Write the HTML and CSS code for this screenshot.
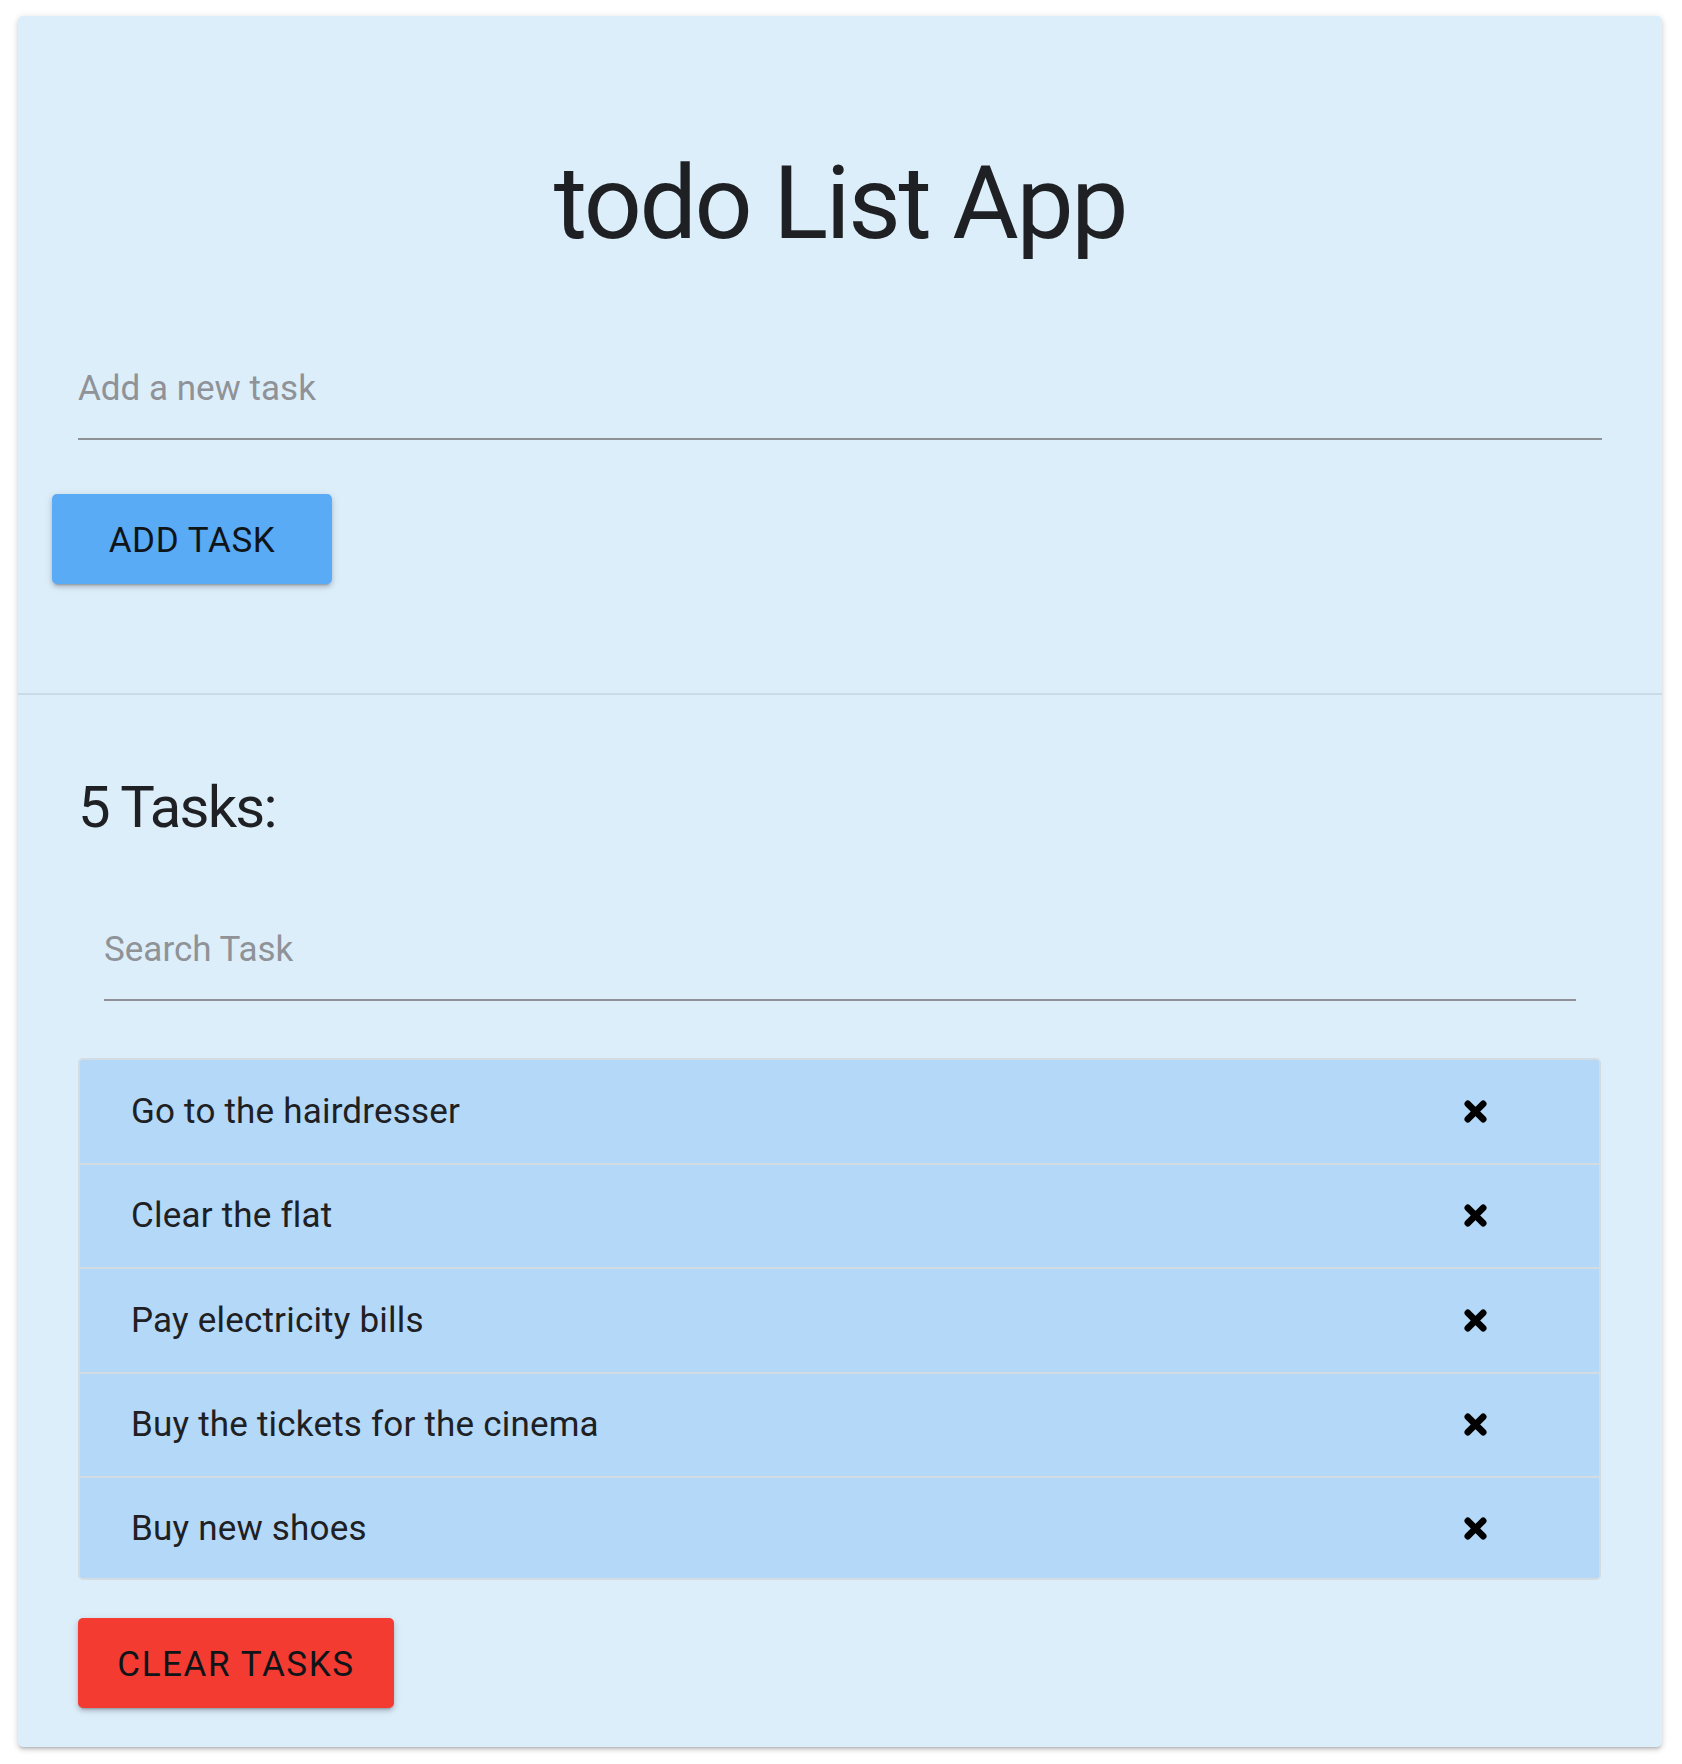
FILE: index.html
```html
<!DOCTYPE html>
<html lang="en">
<head>
<meta charset="utf-8">
<title>todo List App</title>
<link rel="stylesheet" href="styles.css">
</head>
<body>
<div class="page">
  <main class="card">
    <section class="top">
      <h1 class="title">todo List App</h1>
      <div class="field field-add"><span class="placeholder">Add a new task</span></div>
      <button class="btn btn-add" type="button">ADD TASK</button>
    </section>
    <hr class="divider">
    <section class="bottom">
      <h2 class="count">5 Tasks:</h2>
      <div class="field field-search"><span class="placeholder">Search Task</span></div>
      <ul class="list">
        <li class="row"><span class="row-text">Go to the hairdresser</span><svg class="x" viewBox="0 0 23 23"><path d="M3.8 3.8L19.2 19.2M19.2 3.8L3.8 19.2"/></svg></li>
        <li class="row"><span class="row-text">Clear the flat</span><svg class="x" viewBox="0 0 23 23"><path d="M3.8 3.8L19.2 19.2M19.2 3.8L3.8 19.2"/></svg></li>
        <li class="row"><span class="row-text">Pay electricity bills</span><svg class="x" viewBox="0 0 23 23"><path d="M3.8 3.8L19.2 19.2M19.2 3.8L3.8 19.2"/></svg></li>
        <li class="row"><span class="row-text">Buy the tickets for the cinema</span><svg class="x" viewBox="0 0 23 23"><path d="M3.8 3.8L19.2 19.2M19.2 3.8L3.8 19.2"/></svg></li>
        <li class="row"><span class="row-text">Buy new shoes</span><svg class="x" viewBox="0 0 23 23"><path d="M3.8 3.8L19.2 19.2M19.2 3.8L3.8 19.2"/></svg></li>
      </ul>
      <button class="btn btn-clear" type="button">CLEAR TASKS</button>
    </section>
  </main>
</div>
</body>
</html>
```

FILE: styles.css
```css
* { box-sizing: border-box; }

html, body {
  margin: 0;
  padding: 0;
  background: #ffffff;
  font-family: Roboto, "Liberation Sans", Arial, sans-serif;
  color: #1e2023;
}

.page {
  padding: 16px 20px 17px 18px;
}

.card {
  background: #ddeefb;
  border-radius: 5px;
  box-shadow: 0 3px 3px -2px rgba(0,0,0,.18), 0 3px 5px 0 rgba(0,0,0,.12), 0 1px 9px 0 rgba(0,0,0,.10);
  min-height: 1731px;
  display: flex;
  flex-direction: column;
}

.top {
  padding: 127px 0 109px 0;
  display: flex;
  flex-direction: column;
}

.title {
  margin: 0;
  font-size: 102px;
  line-height: 120px;
  font-weight: 400;
  text-align: center;
  letter-spacing: -2.4px;
}

.field {
  border-bottom: 2px solid #8e9195;
  padding-bottom: 29px;
}

.placeholder {
  display: block;
  font-size: 35px;
  line-height: 41px;
  color: #8f9296;
}

.field-add {
  margin: 105px 60px 0 60px;
}

.btn {
  font-family: Roboto, "Liberation Sans", Arial, sans-serif;
  font-size: 35px;
  font-weight: 400;
  height: 90px;
  line-height: 86px;
  padding: 4px 0 0 0;
  border: 0;
  border-radius: 5px;
  color: #0f1418;
  text-align: center;
  box-shadow: 0 4px 2px -3px rgba(0,0,0,.2), 0 3px 4px 0 rgba(0,0,0,.14), 0 2px 9px 0 rgba(0,0,0,.12);
  align-self: flex-start;
}

.btn-add {
  background: #5aabf5;
  width: 280px;
  margin: 54px 0 0 34px;
  letter-spacing: 0.6px;
}

.divider {
  margin: 0;
  border: 0;
  height: 2px;
  background: #cbdce9;
}

.bottom {
  padding: 78px 0 39px 0;
  display: flex;
  flex-direction: column;
}

.count {
  margin: 0 60px;
  font-size: 58px;
  line-height: 68px;
  font-weight: 400;
  letter-spacing: -1.8px;
}

.field-search {
  margin: 88px 86px 0 86px;
}

.list {
  list-style: none;
  margin: 57px 61px 0 60px;
  padding: 0;
  border: 2px solid #d3dce3;
  border-radius: 5px;
  background: #b3d8f8;
}

.row {
  height: 104.5px;
  display: flex;
  align-items: center;
  justify-content: space-between;
  padding: 0 112px 0 51px;
  border-bottom: 2px solid #d3dce3;
  font-size: 35px;
  line-height: 41px;
  letter-spacing: 0.2px;
}

.row:last-child {
  height: 100px;
  border-bottom: 0;
}

.x {
  width: 23px;
  height: 23px;
  flex: none;
}

.x path {
  fill: none;
  stroke: #000;
  stroke-width: 6.6;
  stroke-linecap: round;
}

.btn-clear {
  background: #f33b32;
  width: 316px;
  margin: 38px 0 0 60px;
  letter-spacing: 1.6px;
}
```
